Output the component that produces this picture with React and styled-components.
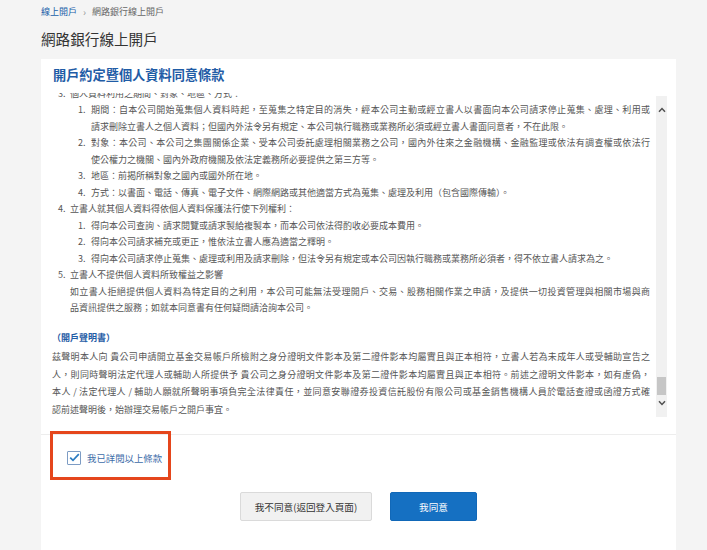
import React, { useLayoutEffect, useRef } from "react";
import styled, { createGlobalStyle } from "styled-components";

const GlobalStyle = createGlobalStyle`
  html, body {
    margin: 0;
    padding: 0;
    background: #f4f4f4;
  }
  body {
    font-family: "Noto Sans CJK TC", "Noto Sans", sans-serif;
    color: #555;
  }
`;

const earlier = [
  {
    num: "1.",
    text: "蒐集之目的：辦理證券投資信託基金之募集、發行、買回、轉申購及其他相關業務，以及金融服務、行銷、客戶管理與服務等特定目的。",
  },
  {
    num: "2.",
    text: "蒐集之個人資料類別：姓名、身分證統一編號、出生年月日、聯絡方式、財務狀況、往來交易資料及其他得以直接或間接識別之個人資料。",
  },
];

const useItems = [
  {
    num: "1.",
    lines: [
      { t: "期間：自本公司開始蒐集個人資料時起，至蒐集之特定目的消失，經本公司主動或經立書人以書面向本公司請求停止蒐集、處理、利用或", fill: true },
      { t: "請求刪除立書人之個人資料；但國內外法令另有規定、本公司執行職務或業務所必須或經立書人書面同意者，不在此限。" },
    ],
  },
  {
    num: "2.",
    lines: [
      { t: "對象：本公司、本公司之集團關係企業、受本公司委託處理相關業務之公司，國內外往來之金融機構、金融監理或依法有調查權或依法行", fill: true },
      { t: "使公權力之機關、國內外政府機關及依法定義務所必要提供之第三方等。" },
    ],
  },
  { num: "3.", lines: [{ t: "地區：前揭所稱對象之國內或國外所在地。" }] },
  { num: "4.", lines: [{ t: "方式：以書面、電話、傳真、電子文件、網際網路或其他適當方式為蒐集、處理及利用（包含國際傳輸）。" }] },
];

const rightItems = [
  { num: "1.", lines: [{ t: "得向本公司查詢、請求閱覽或請求製給複製本，而本公司依法得酌收必要成本費用。" }] },
  { num: "2.", lines: [{ t: "得向本公司請求補充或更正，惟依法立書人應為適當之釋明。" }] },
  { num: "3.", lines: [{ t: "得向本公司請求停止蒐集、處理或利用及請求刪除，但法令另有規定或本公司因執行職務或業務所必須者，得不依立書人請求為之。" }] },
];

const statement = [
  { t: "茲聲明本人向 貴公司申請開立基金交易帳戶所檢附之身分證明文件影本及第二證件影本均屬實且與正本相符，立書人若為未成年人或受輔助宣告之", fill: true },
  { t: "人，則同時聲明法定代理人或輔助人所提供予 貴公司之身分證明文件影本及第二證件影本均屬實且與正本相符。前述之證明文件影本，如有虛偽，", fill: true },
  { t: "本人 / 法定代理人 / 輔助人願就所聲明事項負完全法律責任，並同意安聯證券投資信託股份有限公司或基金銷售機構人員於電話查證或函證方式確", fill: true },
  { t: "認前述聲明後，始辦理交易帳戶之開戶事宜。" },
];

function Lines({ lines }) {
  return lines.map((l) => (
    <Line key={l.t} $fill={l.fill}>
      {l.t}
    </Line>
  ));
}

function SubList({ items }) {
  return (
    <SubListBox>
      {items.map((it) => (
        <Item key={it.num + it.lines[0].t}>
          <SubNum>{it.num}</SubNum>
          <ItemBody>
            <Lines lines={it.lines} />
          </ItemBody>
        </Item>
      ))}
    </SubListBox>
  );
}

function Chevron({ up }) {
  return (
    <svg width="8" height="6" viewBox="0 0 8 6">
      <path
        d={up ? "M1 4.8 L4 1.6 L7 4.8" : "M1 1.2 L4 4.4 L7 1.2"}
        fill="none"
        stroke="#505050"
        strokeWidth="1.5"
      />
    </svg>
  );
}

export default function App() {
  const viewRef = useRef();

  useLayoutEffect(() => {
    const el = viewRef.current;
    if (el) el.scrollTop = el.scrollHeight;
  }, []);

  return (
    <Page>
      <GlobalStyle />
      <Breadcrumb>
        <Crumb href="#">線上開戶</Crumb>
        <Sep>›</Sep>
        <Current>網路銀行線上開戶</Current>
      </Breadcrumb>
      <Title>網路銀行線上開戶</Title>

      <Card>
        <CardHeading>開戶約定暨個人資料同意條款</CardHeading>

        <TermsRow>
          <Viewport ref={viewRef}>
            <Para>
              安聯證券投資信託股份有限公司（以下簡稱本公司）依據個人資料保護法第八條規定，向立書人告知下列事項：
            </Para>
            <List>
              {earlier.map((it) => (
                <Item key={it.num}>
                  <Num>{it.num}</Num>
                  <ItemBody>{it.text}</ItemBody>
                </Item>
              ))}
              <Item>
                <Num>3.</Num>
                <ItemBody>
                  <Line>個人資料利用之期間、對象、地區、方式：</Line>
                  <SubList items={useItems} />
                </ItemBody>
              </Item>
              <Item>
                <Num>4.</Num>
                <ItemBody>
                  <Line>立書人就其個人資料得依個人資料保護法行使下列權利：</Line>
                  <SubList items={rightItems} />
                </ItemBody>
              </Item>
              <Item>
                <Num>5.</Num>
                <ItemBody>
                  <Line>立書人不提供個人資料所致權益之影響</Line>
                  <Line $fill>
                    如立書人拒絕提供個人資料為特定目的之利用，本公司可能無法受理開戶、交易、股務相關作業之申請，及提供一切投資管理與相關市場與商
                  </Line>
                  <Line>品資訊提供之服務；如就本同意書有任何疑問請洽詢本公司。</Line>
                </ItemBody>
              </Item>
            </List>

            <SectionTitle>（開戶聲明書）</SectionTitle>
            <Statement>
              <Lines lines={statement} />
            </Statement>
          </Viewport>

          <ScrollBar>
            <ScrollButton>
              <Chevron up />
            </ScrollButton>
            <Track>
              <Thumb />
            </Track>
            <ScrollButton $down>
              <Chevron />
            </ScrollButton>
          </ScrollBar>
        </TermsRow>

        <CheckArea>
          <CheckLabel>
            <CheckBox>
              <svg width="11" height="9" viewBox="0 0 11 9">
                <path d="M1.2 4.6 L4 7.4 L9.8 1.2" fill="none" stroke="#2b7cc2" strokeWidth="1.7" />
              </svg>
            </CheckBox>
            我已詳閱以上條款
          </CheckLabel>
        </CheckArea>

        <ButtonRow>
          <Button>我不同意(返回登入頁面)</Button>
          <Button $primary>我同意</Button>
        </ButtonRow>
      </Card>
    </Page>
  );
}

const Page = styled.div`
  padding: 6px 31px 0 41px;
`;

const Breadcrumb = styled.div`
  display: flex;
  align-items: center;
  gap: 6px;
  font-size: 9px;
  line-height: 12px;
`;

const Crumb = styled.a`
  color: #2160a9;
  text-decoration: none;
`;

const Sep = styled.span`
  color: #999;
  font-size: 10px;
`;

const Current = styled.span`
  color: #666;
`;

const Title = styled.h1`
  margin: 12px 0 11px;
  font-size: 14.6px;
  line-height: 18px;
  font-weight: 400;
  color: #333;
`;

const Card = styled.div`
  background: #fff;
  min-height: 520px;
`;

const CardHeading = styled.h2`
  margin: 0;
  padding: 8px 12px 10px;
  font-size: 13.2px;
  line-height: 16px;
  font-weight: 700;
  color: #1f5ca6;
`;

const TermsRow = styled.div`
  display: flex;
  align-items: flex-start;
  padding-right: 9px;
  border-bottom: 1px solid #ededed;
  height: 341px;
`;

const Viewport = styled.div`
  flex: 1;
  height: 332px;
  overflow-y: auto;
  scrollbar-width: none;
  padding: 0 6px 0 11px;
  font-size: 9px;
  line-height: 16.5px;
  color: #555;
  &::-webkit-scrollbar {
    display: none;
  }
`;

const Para = styled.p`
  margin: 0;
`;

const List = styled.div`
  display: flex;
  flex-direction: column;
`;

const SubListBox = styled.div`
  display: flex;
  flex-direction: column;
`;

const Item = styled.div`
  display: flex;
`;

const Num = styled.span`
  flex: 0 0 12px;
  margin-left: 6px;
`;

const SubNum = styled.span`
  flex: 0 0 13px;
  margin-left: 8px;
`;

const ItemBody = styled.div`
  flex: 1;
  min-width: 0;
`;

const Line = styled.div`
  white-space: nowrap;
  text-align: justify;
  text-align-last: ${(p) => (p.$fill ? "justify" : "auto")};
`;

const SectionTitle = styled.div`
  margin: 12px 0 2px;
  line-height: 17.5px;
  font-weight: 700;
  color: #1f5ca6;
`;

const Statement = styled.div`
  line-height: 17.5px;
  padding-bottom: 7px;
`;

const ScrollBar = styled.div`
  flex: 0 0 11px;
  height: 321px;
  margin-top: 3px;
  display: flex;
  flex-direction: column;
  background: #f1f1f1;
`;

const ScrollButton = styled.div`
  height: ${(p) => (p.$down ? "22px" : "28px")};
  display: flex;
  align-items: ${(p) => (p.$down ? "flex-start" : "center")};
  padding-top: ${(p) => (p.$down ? "5px" : "0")};
  box-sizing: border-box;
  justify-content: center;
`;

const Track = styled.div`
  flex: 1;
  display: flex;
  flex-direction: column;
  justify-content: flex-end;
  align-items: center;
`;

const Thumb = styled.div`
  width: 9px;
  height: 18px;
  background: #c6c6c6;
`;

const CheckArea = styled.div`
  position: relative;
  width: 118px;
  height: 45px;
  margin-left: 12px;
  display: flex;
  align-items: center;
  padding-left: 14px;
  box-sizing: border-box;
  &::after {
    content: "";
    position: absolute;
    inset: -4px 0 0 -3px;
    border: 3px solid #e5461c;
    pointer-events: none;
  }
`;

const CheckLabel = styled.label`
  display: flex;
  align-items: center;
  gap: 6px;
  font-size: 9.4px;
  color: #3d6ca8;
  cursor: pointer;
`;

const CheckBox = styled.span`
  width: 12px;
  height: 12px;
  border: 1px solid #7d9cc4;
  border-radius: 1px;
  display: flex;
  align-items: center;
  justify-content: center;
  background: #fff;
`;

const ButtonRow = styled.div`
  display: flex;
  justify-content: center;
  gap: 18px;
  margin-top: 12px;
`;

const Button = styled.button`
  width: ${(p) => (p.$primary ? "87px" : "132px")};
  height: 29px;
  border: 1px solid ${(p) => (p.$primary ? "#1168b8" : "#dadada")};
  border-radius: 2px;
  background: ${(p) => (p.$primary ? "#1570c2" : "#f1f1f1")};
  color: ${(p) => (p.$primary ? "#fff" : "#333")};
  font-family: "Noto Sans CJK TC", "Noto Sans", sans-serif;
  font-size: 9.6px;
  cursor: pointer;
`;
